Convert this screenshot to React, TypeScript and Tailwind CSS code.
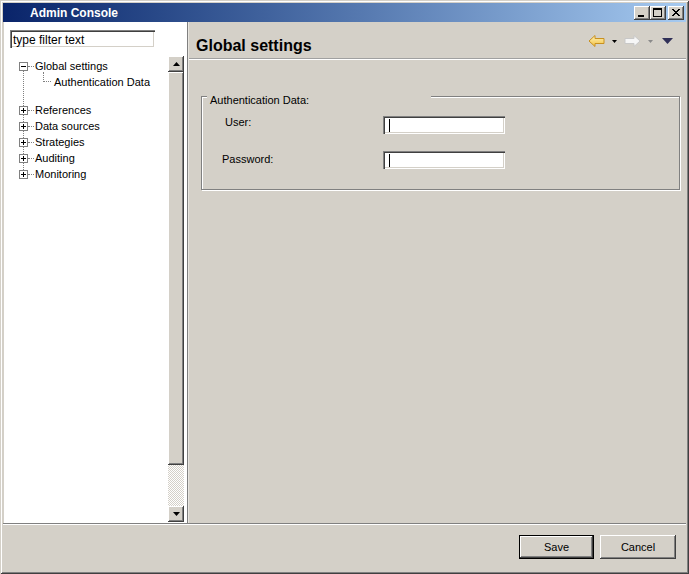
import React from "react";

const raised =
  "bg-[#d4d0c8] shadow-[inset_-1px_-1px_0_#404040,inset_1px_1px_0_#ffffff,inset_-2px_-2px_0_#808080,inset_2px_2px_0_#d4d0c8]";
const sunken =
  "bg-white shadow-[inset_1px_1px_0_#808080,inset_2px_2px_0_#404040,inset_-1px_-1px_0_#ffffff,inset_-2px_-2px_0_#d4d0c8]";

const Box = ({ plus }: { plus?: boolean }) => (
  <span className="relative flex h-[9px] w-[9px] shrink-0 items-center justify-center border border-[#808080] bg-white">
    <svg width="7" height="7" viewBox="0 0 7 7">
      <rect x="1" y="3" width="5" height="1" fill="#000" />
      {plus && <rect x="3" y="1" width="1" height="5" fill="#000" />}
    </svg>
  </span>
);

const TreeRow = ({ label, plus }: { label: string; plus?: boolean }) => (
  <div className="flex h-[16px] items-center">
    <Box plus={plus} />
    <span className="w-[6px] border-t border-dotted border-[#808080]" />
    <span className="ml-[1px] whitespace-nowrap">{label}</span>
  </div>
);

const Field = () => (
  <div className={`flex h-[18px] w-[122px] items-center ${sunken}`}>
    <span className="ml-[6px] h-[13px] w-[1px] bg-black" />
  </div>
);

export default function App() {
  return (
    <div className="flex h-[574px] w-[689px] flex-col bg-[#d4d0c8] p-[3px] font-['Liberation_Sans',Arial,sans-serif] text-[11px] text-black shadow-[inset_1px_1px_0_#d4d0c8,inset_-1px_-1px_0_#404040,inset_2px_2px_0_#ffffff,inset_-2px_-2px_0_#808080]">
      {/* Title bar */}
      <div className="flex h-[19px] shrink-0 items-center bg-linear-to-r from-[#0a246a] to-[#a6caf0] pl-[27px] pr-[2px]">
        <span className="text-[12px] font-bold leading-none text-white">Admin Console</span>
        <div className="ml-auto flex items-center">
          <div className={`flex h-[14px] w-[16px] items-center justify-center ${raised}`}>
            <svg width="16" height="14" viewBox="0 0 16 14">
              <rect x="4" y="9" width="6" height="2" fill="#000" />
            </svg>
          </div>
          <div className={`flex h-[14px] w-[16px] items-center justify-center ${raised}`}>
            <svg width="16" height="14" viewBox="0 0 16 14">
              <rect x="3.5" y="2.5" width="8" height="8" fill="none" stroke="#000" />
              <rect x="3" y="2" width="9" height="2" fill="#000" />
            </svg>
          </div>
          <div className={`ml-[2px] flex h-[14px] w-[16px] items-center justify-center ${raised}`}>
            <svg width="16" height="14" viewBox="0 0 16 14">
              <path d="M4 3 L11 10 M5 3 L12 10 M11 3 L4 10 M12 3 L5 10" stroke="#000" strokeWidth="1" />
            </svg>
          </div>
        </div>
      </div>

      {/* Main area */}
      <div className="flex h-[501px] shrink-0">
        {/* Left panel */}
        <div className="ml-[1px] flex w-[183px] flex-col bg-white">
          <div className="pl-[6px] pt-[8px]">
            <div className={`flex h-[18px] w-[145px] items-center pl-[3px] pt-[1px] text-[12px] ${sunken}`}>
              type filter text
            </div>
          </div>
          <div className="mt-[8px] flex h-[466px]">
            <div className="relative flex-1 pl-[15px] pt-[2px]">
              <div className="absolute left-[19px] top-[15px] h-[103px] border-l border-dotted border-[#808080]" />
              <TreeRow label="Global settings" />
              <div className="flex h-[16px] items-center pl-[24px]">
                <span className="-mt-[10px] h-[10px] w-[8px] border-b border-l border-dotted border-[#808080]" />
                <span className="ml-[3px] whitespace-nowrap">Authentication Data</span>
              </div>
              <div className="h-[12px]" />
              <TreeRow label="References" plus />
              <TreeRow label="Data sources" plus />
              <TreeRow label="Strategies" plus />
              <TreeRow label="Auditing" plus />
              <TreeRow label="Monitoring" plus />
            </div>
            {/* Scrollbar */}
            <div className="flex w-[16px] flex-col">
              <div className={`flex h-[16px] items-center justify-center ${raised}`}>
                <svg width="7" height="4" viewBox="0 0 7 4">
                  <path d="M3.5 0 L7 4 L0 4 Z" fill="#000" />
                </svg>
              </div>
              <div className={`h-[393px] ${raised}`} />
              <div className="h-[41px] bg-[repeating-conic-gradient(#d4d0c8_0_25%,#ffffff_0_50%)] bg-[length:2px_2px]" />
              <div className={`flex h-[16px] items-center justify-center ${raised}`}>
                <svg width="7" height="4" viewBox="0 0 7 4">
                  <path d="M0 0 L7 0 L3.5 4 Z" fill="#000" />
                </svg>
              </div>
            </div>
            <div className="w-[3px]" />
          </div>
        </div>
        <div className="w-[1px] bg-[#808080]" />
        <div className="w-[1px] bg-[#e8e6e0]" />

        {/* Right panel */}
        <div className="flex flex-1 flex-col">
          <div className="flex h-[36px] shrink-0 items-start">
            <div className="ml-[7px] mt-[12px] text-[16px] font-bold leading-[24px]">Global settings</div>
            <div className="ml-auto mr-[13px] mt-[13px] flex items-center">
              <svg width="17" height="12" viewBox="0 0 17 12">
                <defs>
                  <linearGradient id="ya" x1="0" y1="0" x2="0" y2="1">
                    <stop offset="0" stopColor="#fff2b8" />
                    <stop offset="1" stopColor="#f2c040" />
                  </linearGradient>
                </defs>
                <path d="M1 6 L7 0.5 L7 3.5 L16 3.5 L16 8.5 L7 8.5 L7 11.5 Z" fill="url(#ya)" stroke="#c89020" strokeWidth="1" strokeLinejoin="round" />
              </svg>
              <svg className="ml-[7px]" width="5" height="3" viewBox="0 0 5 3">
                <path d="M0 0 L5 0 L2.5 3 Z" fill="#000" />
              </svg>
              <svg className="ml-[7px]" width="17" height="12" viewBox="0 0 17 12">
                <path d="M16 6 L10 0.5 L10 3.5 L1 3.5 L1 8.5 L10 8.5 L10 11.5 Z" fill="#f6f6f6" stroke="#c8c8c8" strokeWidth="1" strokeLinejoin="round" />
              </svg>
              <svg className="ml-[7px]" width="5" height="3" viewBox="0 0 5 3">
                <path d="M0 0 L5 0 L2.5 3 Z" fill="#8a8a8a" />
              </svg>
              <svg className="ml-[9px]" width="11" height="6" viewBox="0 0 11 6">
                <path d="M0 0 L11 0 L5.5 6 Z" fill="#303058" />
              </svg>
            </div>
          </div>
          <div className="h-[1px] bg-[#a0a0a0]" />
          <div className="h-[1px] bg-white" />

          <fieldset className="ml-[12px] mt-[26px] w-[479px] border border-[#808080] px-[5px] pb-[20px] shadow-[1px_1px_0_#ffffff,inset_1px_1px_0_#ffffff]">
            <legend className="w-[224px] bg-[#d4d0c8] pl-[3px] pt-[8px] leading-[13px]">Authentication Data:</legend>
            <div className="mt-[9px] flex h-[18px]">
              <div className="w-[176px] pl-[18px] leading-[13px]">User:</div>
              <Field />
            </div>
            <div className="mt-[17px] flex h-[18px]">
              <div className="w-[176px] pl-[15px] pt-[2px] leading-[13px]">Password:</div>
              <Field />
            </div>
          </fieldset>
        </div>
      </div>

      <div className="h-[1px] shrink-0 bg-[#808080]" />
      {/* Bottom bar */}
      <div className="flex h-[47px] shrink-0 items-start justify-end border-t border-white pr-[10px] pt-[10px]">
        <button className="flex h-[24px] w-[75px] items-center justify-center border border-black bg-[#d4d0c8] text-[11px] shadow-[inset_-1px_-1px_0_#404040,inset_1px_1px_0_#ffffff,inset_-2px_-2px_0_#808080]">
          Save
        </button>
        <button className={`ml-[6px] flex h-[24px] w-[76px] items-center justify-center text-[11px] ${raised}`}>
          Cancel
        </button>
      </div>
    </div>
  );
}
